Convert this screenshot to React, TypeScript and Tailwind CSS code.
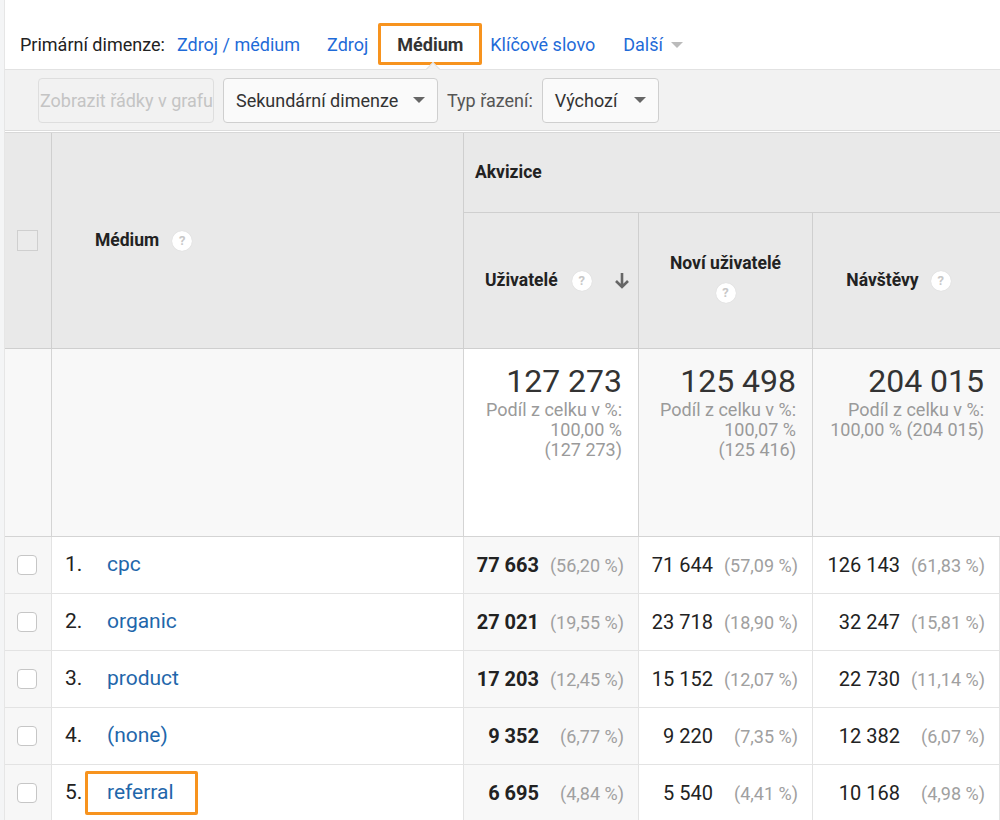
import React from 'react';

const font = { fontFamily: 'Roboto, "Liberation Sans", sans-serif' };

function Help({ className = '' }: { className?: string }) {
  return (
    <span
      className={`inline-flex h-[20px] w-[20px] items-center justify-center rounded-full bg-white text-[13px] font-bold text-[#c8c8c8] shadow-[0_0_1px_rgba(0,0,0,0.15)] ${className}`}
    >
      ?
    </span>
  );
}

function Caret() {
  return (
    <span className="inline-block h-0 w-0 border-x-[6px] border-t-[6px] border-x-transparent border-t-[#666]" />
  );
}

const rows = [
  { n: '1.', name: 'cpc', u: '77 663', up: '(56,20 %)', nu: '71 644', nup: '(57,09 %)', v: '126 143', vp: '(61,83 %)' },
  { n: '2.', name: 'organic', u: '27 021', up: '(19,55 %)', nu: '23 718', nup: '(18,90 %)', v: '32 247', vp: '(15,81 %)' },
  { n: '3.', name: 'product', u: '17 203', up: '(12,45 %)', nu: '15 152', nup: '(12,07 %)', v: '22 730', vp: '(11,14 %)' },
  { n: '4.', name: '(none)', u: '9 352', up: '(6,77 %)', nu: '9 220', nup: '(7,35 %)', v: '12 382', vp: '(6,07 %)' },
  { n: '5.', name: 'referral', u: '6 695', up: '(4,84 %)', nu: '5 540', nup: '(4,41 %)', v: '10 168', vp: '(4,98 %)', boxed: true },
];

function NumCell({ value, pct, bold, bg }: { value: string; pct: string; bold?: boolean; bg: string }) {
  return (
    <div className={`flex items-center justify-end border-b border-r border-[#e3e3e3] pr-[14px] ${bg}`}>
      <span className={`text-[20px] text-[#222] ${bold ? 'font-bold' : ''}`}>{value}</span>
      <span className="w-[85px] text-right text-[18px] text-[#a0a0a0]">{pct}</span>
    </div>
  );
}

export default function App() {
  return (
    <div className="flex min-h-[820px] w-[1000px] bg-[#f4f5f6]" style={font}>
      <div className="ml-[4px] flex-1 border-l border-[#e6e6e6] bg-white">
        {/* primary dimension bar */}
        <div className="flex h-[70px] items-end border-b border-[#e2e2e2] pb-[4px] pl-[15px] text-[18px]">
          <div className="flex h-[42px] items-center">
            <span className="text-[#222]">Primární dimenze:</span>
            <span className="ml-[12px] text-[#1f6bd8]">Zdroj / médium</span>
            <span className="ml-[27px] text-[#1f6bd8]">Zdroj</span>
            <div className="relative ml-[10px] flex h-[42px] w-[104px] items-center justify-center rounded-[2px] border-[3px] border-[#f7931e] font-bold text-[#333]">
              Médium
            </div>
            <span className="ml-[8px] text-[#1f6bd8]">Klíčové slovo</span>
            <span className="ml-[28px] text-[#1f6bd8]">Další</span>
            <span className="ml-[8px] mt-[2px] inline-block h-0 w-0 border-x-[6px] border-t-[6px] border-x-transparent border-t-[#bbb]" />
          </div>
        </div>

        {/* toolbar */}
        <div className="relative flex h-[61px] items-center gap-[9px] border-b border-[#dcdcdc] bg-[#f2f2f2] pl-[33px]">
          <span className="absolute left-[423px] top-[-6px] h-[10px] w-[10px] rotate-45 border-l border-t border-[#e2e2e2] bg-[#f2f2f2]" />
          <div className="flex h-[45px] w-[176px] items-center overflow-hidden whitespace-nowrap rounded-[4px] border border-[#dedede] pl-[1px] text-[18px] text-[#c4c4c4]">
            Zobrazit řádky v grafu
          </div>
          <div className="flex h-[45px] w-[215px] items-center justify-between rounded-[4px] border border-[#cfcfcf] bg-[#fafafa] px-[12px] text-[18px] text-[#333]">
            Sekundární dimenze
            <Caret />
          </div>
          <span className="text-[18px] text-[#555]">Typ řazení:</span>
          <div className="flex h-[45px] w-[117px] items-center justify-between rounded-[4px] border border-[#cfcfcf] bg-[#fafafa] px-[12px] text-[18px] text-[#333]">
            Výchozí
            <Caret />
          </div>
        </div>

        {/* table */}
        <div className="mt-[1px] grid grid-cols-[47px_412px_175px_174px_187px] grid-rows-[80px_136px_188px_57px_57px_57px_57px_57px] border-t border-[#d8d8d8] text-[#222]">
          {/* header */}
          <div className="row-span-2 flex items-center border-b border-r border-[#cfcfcf] bg-[#e9e9e9] pl-[12px]">
            <span className="h-[21px] w-[21px] border border-[#cfcfcf] bg-[#ebebeb]" />
          </div>
          <div className="row-span-2 flex items-center gap-[13px] border-b border-r border-[#cfcfcf] bg-[#e9e9e9] pl-[43px] text-[17.5px] font-bold">
            Médium <Help />
          </div>
          <div className="col-span-3 flex items-center border-b border-[#cfcfcf] bg-[#e9e9e9] pl-[11px] text-[17.5px] font-bold">
            Akvizice
          </div>
          <div className="flex items-center border-b border-r border-[#cfcfcf] bg-[#e9e9e9] pl-[21px] pr-[8px] text-[17.5px] font-bold">
            Uživatelé
            <Help className="ml-[14px]" />
            <svg className="ml-auto" width="16" height="18" viewBox="0 0 16 18">
              <path d="M8 1v14M2 9l6 6 6-6" fill="none" stroke="#666" strokeWidth="2.6" />
            </svg>
          </div>
          <div className="flex flex-col items-center justify-center gap-[6px] border-b border-r border-[#cfcfcf] bg-[#e9e9e9] pb-[8px] text-[17.5px] font-bold">
            Noví uživatelé
            <Help />
          </div>
          <div className="flex items-center justify-center gap-[12px] border-b border-[#cfcfcf] bg-[#e9e9e9] pr-[16px] text-[17.5px] font-bold">
            Návštěvy <Help />
          </div>

          {/* totals */}
          <div className="border-b border-r border-[#d4d4d4] bg-[#f8f8f8]" />
          <div className="border-b border-r border-[#d4d4d4] bg-[#f8f8f8]" />
          <div className="flex flex-col items-end border-b border-r border-[#d4d4d4] bg-white pr-[16px] pt-[13px] text-right">
            <span className="text-[32px] leading-[38px] text-[#333]">127 273</span>
            <span className="text-[18px] leading-[20px] text-[#9a9a9a]">
              Podíl z celku v %:<br />100,00 %<br />(127 273)
            </span>
          </div>
          <div className="flex flex-col items-end border-b border-r border-[#d4d4d4] bg-[#f8f8f8] pr-[16px] pt-[13px] text-right">
            <span className="text-[32px] leading-[38px] text-[#333]">125 498</span>
            <span className="text-[18px] leading-[20px] text-[#9a9a9a]">
              Podíl z celku v %:<br />100,07 %<br />(125 416)
            </span>
          </div>
          <div className="flex flex-col items-end border-b border-[#d4d4d4] bg-[#f8f8f8] pr-[16px] pt-[13px] text-right">
            <span className="text-[32px] leading-[38px] text-[#333]">204 015</span>
            <span className="whitespace-nowrap text-[18px] leading-[20px] text-[#9a9a9a]">
              Podíl z celku v %:<br />100,00 % (204 015)
            </span>
          </div>

          {/* data rows */}
          {rows.map((r) => (
            <React.Fragment key={r.n}>
              <div className="flex items-center border-b border-r border-[#e3e3e3] bg-[#f7f7f7] pl-[12px]">
                <span className="h-[20px] w-[20px] rounded-[4px] border border-[#c6c6c6] bg-white" />
              </div>
              <div className="flex items-center border-b border-r border-[#e3e3e3] bg-white pl-[13px] text-[21px]">
                <span className="w-[32px] text-[#222]">{r.n}</span>
                {r.boxed ? (
                  <span className="-ml-[12px] flex h-[44px] w-[113px] items-center rounded-[2px] border-[3px] border-[#f7931e] pl-[19px] text-[#1f67ab]">
                    {r.name}
                  </span>
                ) : (
                  <span className="ml-[10px] text-[#1f67ab]">{r.name}</span>
                )}
              </div>
              <NumCell value={r.u} pct={r.up} bold bg="bg-[#f8f8f8]" />
              <NumCell value={r.nu} pct={r.nup} bg="bg-white" />
              <NumCell value={r.v} pct={r.vp} bg="bg-white" />
            </React.Fragment>
          ))}
        </div>
      </div>
    </div>
  );
}
